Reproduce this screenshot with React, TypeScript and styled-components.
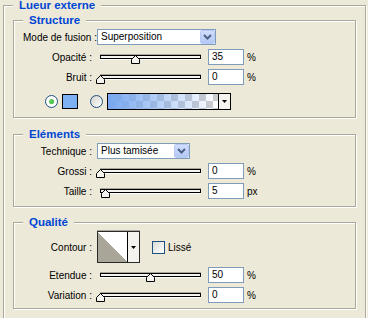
import { FC } from 'react'
import styled, { createGlobalStyle } from 'styled-components'

const GlobalStyle = createGlobalStyle`
  html, body {
    margin: 0;
    padding: 0;
    background: #ece9d8;
    overflow: hidden;
  }
  body {
    font-family: "Liberation Sans", Arial, sans-serif;
    font-size: 10px;
    color: #000;
  }
`

const Window = styled.div`
  box-sizing: border-box;
  height: 318px;
  padding: 5px 0 0 3px;
  overflow: hidden;
`
const Group = styled.div<{ $outer?: boolean }>`
  position: relative;
  box-sizing: border-box;
  border: 1px solid #aca899;
  box-shadow: inset 1px 1px 0 #fff, 1px 1px 0 #fff;
  width: ${p => (p.$outer ? '363px' : '343px')};
  padding: ${p => (p.$outer ? '0 9px 40px' : '8px 9px 0')};
`
const Title = styled.span`
  position: absolute;
  top: -7px;
  left: 9px;
  padding: 0 6px;
  background: #ece9d8;
  color: #0046d5;
  font-size: 11.5px;
  font-weight: bold;
  line-height: 12px;
  white-space: nowrap;
`
const Section = styled(Group)<{ $top: number; $bottom: number }>`
  margin-top: ${p => p.$top}px;
  padding-bottom: ${p => p.$bottom}px;
`
const Rows = styled.div`
  display: flex;
  flex-direction: column;
  gap: 4px;
`
const Row = styled.div<{ $h?: number; $indent?: number; $gapTop?: number }>`
  display: flex;
  align-items: center;
  height: ${p => p.$h ?? 16}px;
  padding-left: ${p => p.$indent ?? 0}px;
  margin-top: ${p => p.$gapTop ?? 0}px;
`
const Label = styled.span`
  flex-shrink: 0;
  width: 69px;
  margin-right: 5px;
  text-align: right;
  white-space: nowrap;
`
const SelectBox = styled.div<{ $w: number }>`
  display: flex;
  box-sizing: border-box;
  width: ${p => p.$w}px;
  height: 16px;
  border: 1px solid #7f9db9;
  background: #fff;
`
const SelectText = styled.span`
  flex: 1;
  padding-left: 3px;
  line-height: 14px;
  white-space: nowrap;
`
const DropButton = styled.span`
  display: flex;
  align-items: center;
  justify-content: center;
  box-sizing: border-box;
  width: 15px;
  height: 14px;
  border: 1px solid #b9cbf4;
  border-radius: 2px;
  background: linear-gradient(#d0ddfd, #b4c8f6);
`
const SliderBox = styled.div`
  position: relative;
  box-sizing: border-box;
  width: 112px;
  height: 16px;
  margin-left: -1px;
  padding: 6px 0 0 4px;
`
const Track = styled.div`
  box-sizing: border-box;
  width: 101px;
  height: 4px;
  border: 1px solid #000;
  background: #f4f3ee;
  box-shadow: 0 -1px 0 #aca899, 0 1px 0 #fff;
`
const ThumbMark = styled.svg`
  position: absolute;
  top: 6px;
  width: 9px;
  height: 9px;
`
const NumberField = styled.div`
  box-sizing: border-box;
  width: 36px;
  height: 16px;
  padding-left: 3px;
  border: 1px solid #7f9db9;
  background: #fff;
  line-height: 14px;
`
const Unit = styled.span`
  margin-left: 3px;
`
const Radio = styled.span<{ $on?: boolean; $gap?: number }>`
  display: flex;
  align-items: center;
  justify-content: center;
  box-sizing: border-box;
  width: 13px;
  height: 13px;
  margin-left: ${p => p.$gap ?? 0}px;
  border: 1px solid #1c5180;
  border-radius: 50%;
  background: ${p => (p.$on ? '#fff' : 'linear-gradient(135deg, #d4d3cb, #fff)')};
`
const RadioDot = styled.span`
  width: 5px;
  height: 5px;
  border-radius: 50%;
  background: radial-gradient(circle at 40% 40%, #6fdc6f, #21a121);
`
const Swatch = styled.span`
  box-sizing: border-box;
  width: 16px;
  height: 15px;
  margin-left: 4px;
  border: 1px solid #000;
  background: #7eb0f4;
`
const GradientPicker = styled.div`
  display: flex;
  box-sizing: border-box;
  width: 124px;
  height: 17px;
  margin-left: 4px;
  border: 1px solid #000;
`
const GradientFill = styled.span`
  flex: 1;
  background:
    linear-gradient(to right, #78a8f0, rgba(126, 176, 244, 0)),
    conic-gradient(#cdcdcd 90deg, #fff 90deg 180deg, #cdcdcd 180deg 270deg, #fff 270deg) 0 0 / 14px 14px;
`
const ArrowCell = styled.span<{ $divider?: boolean }>`
  display: flex;
  align-items: center;
  justify-content: center;
  width: 11px;
  border-left: ${p => (p.$divider ? '1px solid #000' : 'none')};
  background: #f4f3ee;
`
const ContourPicker = styled.div`
  display: flex;
  box-sizing: border-box;
  width: 43px;
  height: 32px;
  border: 1px solid #2a2a2a;
  box-shadow: 0 -1px 0 #aca899;
  background: #f4f3ee;
`
const ContourPreview = styled.span`
  width: 30px;
  border-right: 1px solid #000;
  background: linear-gradient(to top right, #a9a699 50%, #fff 50%);
`
const CheckBox = styled.span`
  box-sizing: border-box;
  width: 13px;
  height: 13px;
  margin-left: 12px;
  border: 1px solid #1c5180;
  background: linear-gradient(135deg, #dcdcd5, #fff);
`
const CheckText = styled.span`
  margin-left: 3px;
`

const Chevron: FC = () => (
  <svg width="9" height="6" viewBox="0 0 9 6">
    <path d="M1 1 L4.5 4.5 L8 1" fill="none" stroke="#4d6185" strokeWidth="2" />
  </svg>
)

const SmallArrow: FC = () => (
  <svg width="5" height="3" viewBox="0 0 5 3">
    <polygon points="0,0 5,0 2.5,3" fill="#000" />
  </svg>
)

const Select: FC<{ value: string; width: number }> = ({ value, width }) => (
  <SelectBox $w={width}>
    <SelectText>{value}</SelectText>
    <DropButton><Chevron /></DropButton>
  </SelectBox>
)

interface ISliderRow {
  label: string,
  value: number,
  pos: number,
  unit: string,
}

const SliderRow: FC<ISliderRow> = ({ label, value, pos, unit }) => (
  <Row>
    <Label>{label}</Label>
    <SliderBox>
      <Track />
      <ThumbMark viewBox="0 0 9 9" style={{ left: pos }}>
        <polygon points="4.5,0.5 8.5,4.5 8.5,8.5 0.5,8.5 0.5,4.5" fill="#f4f3ee" stroke="#000" strokeWidth="1" />
      </ThumbMark>
    </SliderBox>
    <NumberField>{value}</NumberField>
    <Unit>{unit}</Unit>
  </Row>
)

const App: FC = () => {
  return (
    <Window>
      <GlobalStyle />
      <Group $outer>
        <Title>Lueur externe</Title>

        <Section $top={14} $bottom={8}>
          <Title>Structure</Title>
          <Rows>
            <Row>
              <Label>Mode de fusion :</Label>
              <Select value="Superposition" width={119} />
            </Row>
            <SliderRow label="Opacité :" value={35} pos={35} unit="%" />
            <SliderRow label="Bruit :" value={0} pos={0} unit="%" />
            <Row $indent={22} $gapTop={4}>
              <Radio $on><RadioDot /></Radio>
              <Swatch />
              <Radio $gap={12} />
              <GradientPicker>
                <GradientFill />
                <ArrowCell $divider><SmallArrow /></ArrowCell>
              </GradientPicker>
            </Row>
          </Rows>
        </Section>

        <Section $top={16} $bottom={7}>
          <Title>Eléments</Title>
          <Rows>
            <Row>
              <Label>Technique :</Label>
              <Select value="Plus tamisée" width={93} />
            </Row>
            <SliderRow label="Grossi :" value={0} pos={0} unit="%" />
            <SliderRow label="Taille :" value={5} pos={5} unit="px" />
          </Rows>
        </Section>

        <Section $top={15} $bottom={5}>
          <Title>Qualité</Title>
          <Rows>
            <Row $h={32}>
              <Label>Contour :</Label>
              <ContourPicker>
                <ContourPreview />
                <ArrowCell><SmallArrow /></ArrowCell>
              </ContourPicker>
              <CheckBox />
              <CheckText>Lissé</CheckText>
            </Row>
            <SliderRow label="Etendue :" value={50} pos={50} unit="%" />
            <SliderRow label="Variation :" value={0} pos={0} unit="%" />
          </Rows>
        </Section>
      </Group>
    </Window>
  )
}

export default App
